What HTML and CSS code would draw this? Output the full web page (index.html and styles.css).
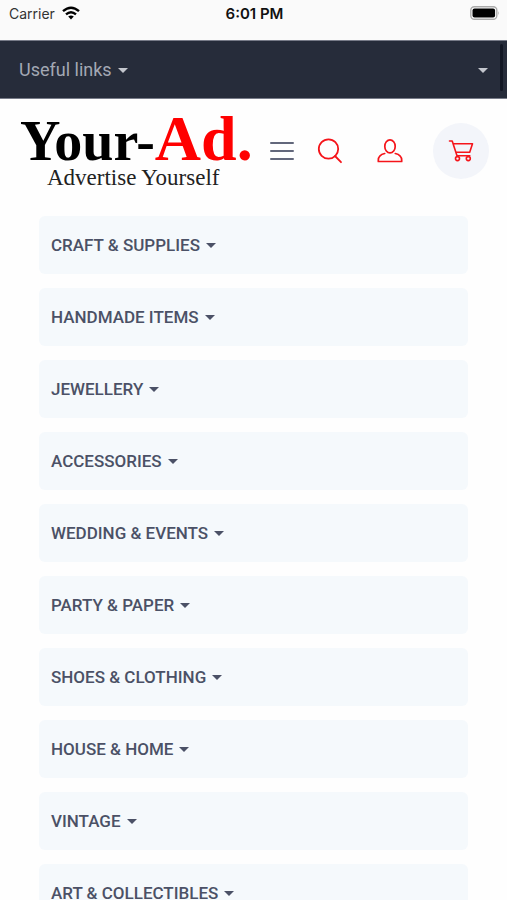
FILE: index.html
```html
<!DOCTYPE html>
<html lang="en">
<head>
<meta charset="utf-8">
<meta name="viewport" content="width=device-width, initial-scale=1">
<title>Your-Ad.</title>
<link rel="stylesheet" href="styles.css">
</head>
<body>
<div class="status">
  <div class="carrier">Carrier
    <svg width="18" height="14" viewBox="0 0 18 14" fill="none" stroke="#000" stroke-width="2.4"><path d="M1 5.2Q9-1.8 17 5.2M4 8.4Q9 4 14 8.4"/><path d="M6.2 10.6Q9 8.4 11.8 10.6L9 13.6z" fill="#000" stroke="none"/></svg>
  </div>
  <time>6:01 PM</time>
  <svg class="battery" width="30" height="14" viewBox="0 0 30 14"><rect x=".8" y=".8" width="26" height="12.4" rx="3.5" fill="#fff" stroke="#aaa" stroke-width="1.4"/><rect x="2.5" y="2.5" width="22.6" height="9" rx="2" fill="#000"/><path d="M28.2 5v4.2q1.6-2 0-4.2" fill="#aaa"/></svg>
</div>
<nav class="topbar" aria-label="Useful links">
  <button class="toplink" type="button">Useful links<span class="caret"></span></button>
  <button class="toplink" type="button" aria-label="More"><span class="caret"></span></button>
  <span class="scrollbar"></span>
</nav>
<header class="header">
  <a class="logo" href="#"><span class="name">Your-<b class="ad">Ad.</b></span><span class="tagline">Advertise Yourself</span></a>
  <div class="tools">
    <button class="tool" type="button" aria-label="Menu"><svg width="24" height="20" viewBox="0 0 24 20" stroke="#62677b" stroke-width="2" stroke-linecap="round"><path d="M1 2h22M1 10h22M1 18h22"/></svg></button>
    <button class="tool" type="button" aria-label="Search"><svg width="26" height="26" viewBox="0 0 26 26" fill="none" stroke="#f5141a" stroke-width="1.8" stroke-linecap="round"><circle cx="11.5" cy="11" r="9.7"/><path d="m18 18 6 6.2"/></svg></button>
    <button class="tool" type="button" aria-label="Account"><svg width="26" height="26" viewBox="0 0 26 26" fill="none" stroke="#f5141a" stroke-width="1.7" stroke-linejoin="round" stroke-linecap="round"><ellipse cx="13" cy="8.4" rx="5.2" ry="6.5"/><path d="M7.7 15.5Q1.3 17 1.3 22.2v1.3h23.4v-1.3Q24.7 17 18.3 15.5"/></svg></button>
    <button class="tool cart" type="button" aria-label="Cart"><svg width="26" height="24" viewBox="0 0 26 24" fill="none" stroke="#f5141a" stroke-width="1.6" stroke-linejoin="round" stroke-linecap="round"><path d="M1.5 2h2.7L9 16.8h12.8M5.4 4.8H24.5L21.7 13.3H7.8"/><circle cx="9.5" cy="19.6" r="2"/><circle cx="20.3" cy="19.6" r="2"/></svg></button>
  </div>
</header>
<main>
  <ul class="categories">
    <li><button type="button">CRAFT &amp; SUPPLIES<span class="caret"></span></button></li>
    <li><button type="button">HANDMADE ITEMS<span class="caret"></span></button></li>
    <li><button type="button">JEWELLERY<span class="caret"></span></button></li>
    <li><button type="button">ACCESSORIES<span class="caret"></span></button></li>
    <li><button type="button">WEDDING &amp; EVENTS<span class="caret"></span></button></li>
    <li><button type="button">PARTY &amp; PAPER<span class="caret"></span></button></li>
    <li><button type="button">SHOES &amp; CLOTHING<span class="caret"></span></button></li>
    <li><button type="button">HOUSE &amp; HOME<span class="caret"></span></button></li>
    <li><button type="button">VINTAGE<span class="caret"></span></button></li>
    <li><button type="button">ART &amp; COLLECTIBLES<span class="caret"></span></button></li>
  </ul>
</main>
</body>
</html>
```
FILE: styles.css
```css
* { box-sizing: border-box; }
html { scrollbar-width: none; }
body { margin: 0; background: #fefefe; font-family: Roboto, "Liberation Sans", sans-serif; color: #4b5166; }
button { margin: 0; padding: 0; border: 0; background: none; font: inherit; color: inherit; cursor: pointer; }
svg { display: block; }

.status { display: grid; grid-template-columns: 1fr auto 1fr; align-items: start; height: 40px; padding: 4px 7px 0 9px; background: #fafafa; color: #111; font: 14px/20px Inter, sans-serif; }
.status time { font-size: 15px; font-weight: 600; }
.carrier { display: flex; gap: 7px; color: #333; }
.carrier svg { margin-top: 2px; }
.battery { justify-self: end; margin-top: 2px; }

.topbar { position: relative; display: flex; justify-content: space-between; align-items: center; height: 59px; padding: 0 19px; border-top: 1px solid #777b88; border-bottom: 1px solid #777b88; background: #262c3a; color: #a3a8b4; font-size: 18px; line-height: 24px; }
.toplink { display: flex; align-items: center; gap: 6px; }
.scrollbar { position: absolute; top: 3px; right: 4px; width: 3px; height: 47px; border-radius: 2px; background: #121724; }
.caret { border: 5px solid transparent; border-top-color: currentColor; border-bottom: 0; margin-top: 1px; }
.topbar .caret { color: #c3c6cd; }

.header { display: flex; align-items: flex-start; justify-content: space-between; padding: 14px 18px 13px 20px; }
.logo { display: flex; flex-direction: column; height: 90px; font-family: "Liberation Serif", serif; color: #000; text-decoration: none; }
.name { font-size: 56px; font-weight: 700; line-height: 52px; white-space: nowrap; }
.ad { font-size: 64px; line-height: 52px; color: #f00; }
.tagline { padding-left: 27px; font-size: 23px; line-height: 22px; color: #222; }
.tools { display: flex; align-items: center; gap: 23px; margin-top: 10px; }
.tool + .tool + .tool { margin-left: 11px; }
.tools .cart.cart { margin-left: 7px; }
.cart { display: grid; place-items: center; width: 56px; height: 56px; border-radius: 50%; background: #f3f5fa; }

.categories { display: grid; gap: 14px; margin: 0; padding: 0 39px; list-style: none; }
.categories button { display: flex; align-items: center; gap: 6px; width: 100%; height: 58px; padding: 0 12px; border-radius: 6px; background: #f5f9fc; font-size: 17px; font-weight: 500; line-height: 24px; }
```
